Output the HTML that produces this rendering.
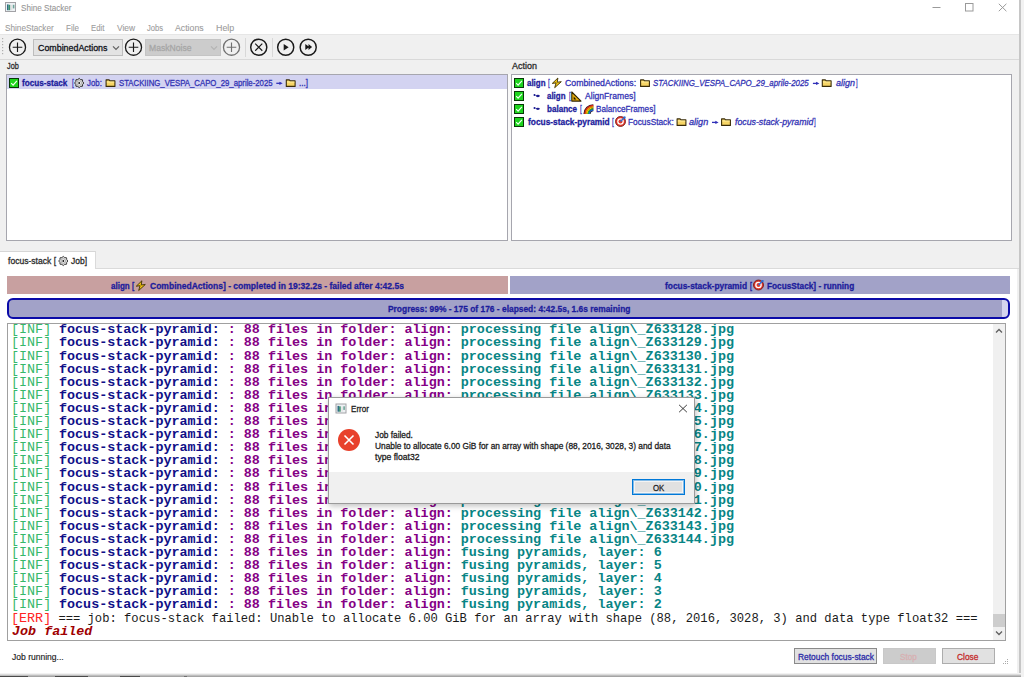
<!DOCTYPE html>
<html><head><meta charset="utf-8"><title>Shine Stacker</title><style>
html,body{margin:0;padding:0;}
body{width:1024px;height:677px;position:relative;overflow:hidden;background:#fff;font-family:"Liberation Sans",sans-serif;}
.t{position:absolute;white-space:pre;transform-origin:0 0;-webkit-text-stroke:0.3px currentColor;}
.lg{position:absolute;white-space:pre;font-family:"Liberation Mono",monospace;transform-origin:0 0;}
.g{color:#36b86a}.n{color:#101088}.p{color:#850085}.c{color:#078585}.r{color:#ff2424}
</style></head><body>
<svg style="position:absolute;left:5px;top:2px;overflow:visible;" width="12" height="11" viewBox="0 0 12 11"><rect x="0.5" y="0.5" width="10" height="9" fill="#eef1f4" stroke="#a2a2a6" stroke-width="1"/><rect x="2" y="2.4" width="1.6" height="5.8" fill="#2f6f84"/><rect x="3.6" y="2.8" width="1.6" height="5.4" fill="#3b8f6a"/><rect x="6" y="3" width="1.2" height="5.2" fill="#e2e0e0"/><rect x="7.8" y="2.8" width="1.6" height="3.6" fill="#6fa59a"/></svg>
<div class="t" style="left:20.50px;top:4.20px;font-size:9.3px;line-height:9.3px;color:#959595;transform:scaleX(0.8722);-webkit-text-stroke:0.1px currentColor;">Shine Stacker</div>
<svg style="position:absolute;left:928px;top:0px;overflow:visible;" width="91" height="19" viewBox="0 0 91 19"><path d="M4.5 7.5H12.5" stroke="#9a9a9a" stroke-width="1"/><rect x="37.5" y="3.5" width="7.5" height="7.5" fill="none" stroke="#9a9a9a" stroke-width="1"/><path d="M70.8 3.8L78.4 11.2M78.4 3.8L70.8 11.2" stroke="#9a9a9a" stroke-width="1"/></svg>
<div class="t" style="left:5.30px;top:23.80px;font-size:9.3px;line-height:9.3px;color:#9c9c9c;transform:scaleX(0.8807);-webkit-text-stroke:0.1px currentColor;">ShineStacker</div>
<div class="t" style="left:65.60px;top:23.80px;font-size:9.3px;line-height:9.3px;color:#9c9c9c;transform:scaleX(0.8600);-webkit-text-stroke:0.1px currentColor;">File</div>
<div class="t" style="left:90.90px;top:23.80px;font-size:9.3px;line-height:9.3px;color:#9c9c9c;transform:scaleX(0.8349);-webkit-text-stroke:0.1px currentColor;">Edit</div>
<div class="t" style="left:116.80px;top:23.80px;font-size:9.3px;line-height:9.3px;color:#9c9c9c;transform:scaleX(0.9100);-webkit-text-stroke:0.1px currentColor;">View</div>
<div class="t" style="left:146.90px;top:23.80px;font-size:9.3px;line-height:9.3px;color:#9c9c9c;transform:scaleX(0.8193);-webkit-text-stroke:0.1px currentColor;">Jobs</div>
<div class="t" style="left:175.40px;top:23.80px;font-size:9.3px;line-height:9.3px;color:#9c9c9c;transform:scaleX(0.9377);-webkit-text-stroke:0.1px currentColor;">Actions</div>
<div class="t" style="left:215.70px;top:23.80px;font-size:9.3px;line-height:9.3px;color:#9c9c9c;transform:scaleX(0.9556);-webkit-text-stroke:0.1px currentColor;">Help</div>
<div style="position:absolute;left:0px;top:34px;width:1019px;height:25px;background:#f0f0f0;border-top:1px solid #e6e6e6;box-sizing:border-box"></div>
<div style="position:absolute;left:0px;top:59px;width:1019px;height:1px;background:#d9d9d9"></div>
<svg style="position:absolute;left:1px;top:37px;overflow:visible;" width="5" height="21" viewBox="0 0 5 21"><rect x="1" y="1" width="1.2" height="1.2" fill="#b0b0b0"/><rect x="1" y="4" width="1.2" height="1.2" fill="#b0b0b0"/><rect x="1" y="7" width="1.2" height="1.2" fill="#b0b0b0"/><rect x="1" y="10" width="1.2" height="1.2" fill="#b0b0b0"/><rect x="1" y="13" width="1.2" height="1.2" fill="#b0b0b0"/><rect x="1" y="16" width="1.2" height="1.2" fill="#b0b0b0"/></svg>
<svg style="position:absolute;left:7px;top:37px;overflow:visible;" width="21" height="21" viewBox="0 0 21 21"><g transform="translate(0.50 0.20)"><circle cx="10" cy="10" r="8.05" fill="none" stroke="#1a1a1a" stroke-width="1.3"/><path d="M10 5.2V14.8M5.2 10H14.8" stroke="#1a1a1a" stroke-width="1.15"/></g></svg>
<div style="position:absolute;left:33px;top:39px;width:90px;height:17px;background:#e3e3e3;border:1px solid #bdbdbd;box-sizing:border-box"></div>
<div class="t" style="left:37.50px;top:42.80px;font-size:9.6px;line-height:9.6px;color:#101018;transform:scaleX(0.9236);">CombinedActions</div>
<svg style="position:absolute;left:112px;top:45px;overflow:visible;" width="9" height="7" viewBox="0 0 9 7"><path d="M1 1.3L4 4.3L7 1.3" fill="none" stroke="#606060" stroke-width="1.2"/></svg>
<svg style="position:absolute;left:123px;top:37px;overflow:visible;" width="21" height="21" viewBox="0 0 21 21"><g transform="translate(0.50 0.20)"><circle cx="10" cy="10" r="8.05" fill="none" stroke="#1a1a1a" stroke-width="1.3"/><path d="M10 5.2V14.8M5.2 10H14.8" stroke="#1a1a1a" stroke-width="1.15"/></g></svg>
<div style="position:absolute;left:145px;top:39px;width:76px;height:17px;background:#cccccc;border:1px solid #c4c4c4;box-sizing:border-box"></div>
<div class="t" style="left:148.75px;top:42.80px;font-size:9.6px;line-height:9.6px;color:#a6a6a6;transform:scaleX(0.8947);">MaskNoise</div>
<svg style="position:absolute;left:210px;top:45px;overflow:visible;" width="9" height="7" viewBox="0 0 9 7"><path d="M1 1.3L4 4.3L7 1.3" fill="none" stroke="#b4b4b4" stroke-width="1.2"/></svg>
<svg style="position:absolute;left:221px;top:37px;overflow:visible;" width="21" height="21" viewBox="0 0 21 21"><g transform="translate(0.50 0.20)"><circle cx="10" cy="10" r="8.05" fill="none" stroke="#707070" stroke-width="1.3"/><path d="M10 5.2V14.8M5.2 10H14.8" stroke="#707070" stroke-width="1.15"/></g></svg>
<div style="position:absolute;left:245px;top:38px;width:1px;height:19px;background:#d8d8d8"></div>
<svg style="position:absolute;left:248px;top:37px;overflow:visible;" width="21" height="21" viewBox="0 0 21 21"><g transform="translate(0.75 0.20)"><circle cx="10" cy="10" r="8.05" fill="none" stroke="#1a1a1a" stroke-width="1.45"/><path d="M6.45 6.45L13.55 13.55M13.55 6.45L6.45 13.55" stroke="#1a1a1a" stroke-width="1.15"/></g></svg>
<div style="position:absolute;left:272px;top:38px;width:1px;height:19px;background:#d8d8d8"></div>
<svg style="position:absolute;left:275px;top:37px;overflow:visible;" width="21" height="21" viewBox="0 0 21 21"><g transform="translate(0.70 0.20)"><circle cx="10" cy="10" r="8.05" fill="none" stroke="#1a1a1a" stroke-width="1.45"/><path d="M8 6.9L13 10.1L8 13.3Z" fill="#1a1a1a"/></g></svg>
<svg style="position:absolute;left:298px;top:37px;overflow:visible;" width="21" height="21" viewBox="0 0 21 21"><g transform="translate(0.20 0.20)"><circle cx="10" cy="10" r="8.05" fill="none" stroke="#1a1a1a" stroke-width="1.45"/><path d="M7.1 6.8L11.2 9.85L7.1 12.9Z M10.3 6.8L13.9 9.85L10.3 12.9Z" fill="#1a1a1a"/></g></svg>
<div style="position:absolute;left:0px;top:60px;width:1019px;height:209px;background:#f0f0f0"></div>
<div class="t" style="left:7.20px;top:61.40px;font-size:9.6px;line-height:9.6px;color:#2a2a2a;transform:scaleX(0.7613);">Job</div>
<div class="t" style="left:512.00px;top:61.40px;font-size:9.6px;line-height:9.6px;color:#2a2a2a;transform:scaleX(0.9326);">Action</div>
<div style="position:absolute;left:6px;top:74px;width:502px;height:167px;background:#fff;border:1px solid #a6a6ae;box-sizing:border-box"></div>
<div style="position:absolute;left:508px;top:74px;width:3px;height:167px;background:#f8f8f8"></div>
<div style="position:absolute;left:511px;top:74px;width:501px;height:167px;background:#fff;border:1px solid #a6a6ae;box-sizing:border-box"></div>
<div style="position:absolute;left:7px;top:75px;width:500px;height:14px;background:#d3d3f1"></div>
<svg style="position:absolute;left:9px;top:78px;overflow:visible;" width="11" height="11" viewBox="0 0 11 11"><rect x="0.5" y="0.5" width="9" height="9" fill="#1ed41e" stroke="#083808" stroke-width="1"/><path d="M2.2 5.2L4.1 7.1L7.9 2.9" fill="none" stroke="#f0fff0" stroke-width="1.2"/></svg>
<div class="t" style="left:22.30px;top:78.30px;font-size:9.5px;line-height:9.5px;color:#1c1c9c;font-weight:700;transform:scaleX(0.8598);">focus-stack</div>
<div class="t" style="left:71.60px;top:78.30px;font-size:9.5px;line-height:9.5px;color:#3232b4;transform:scaleX(0.6792);">[</div>
<svg style="position:absolute;left:74px;top:78px;overflow:visible;" width="11" height="11" viewBox="0 0 11 11"><g transform="translate(0.20 0.00)"><path d="M5.00 0.40 L6.42 1.58 L8.25 1.75 L8.42 3.58 L9.60 5.00 L8.42 6.42 L8.25 8.25 L6.42 8.42 L5.00 9.60 L3.58 8.42 L1.75 8.25 L1.58 6.42 L0.40 5.00 L1.58 3.58 L1.75 1.75 L3.58 1.58Z" fill="#d8d8d8" stroke="#333" stroke-width="1" stroke-linejoin="round"/><circle cx="5" cy="5" r="2.2" fill="#f4f4f4" stroke="#888" stroke-width="0.6"/><circle cx="5" cy="5" r="0.9" fill="#111"/></g></svg>
<div class="t" style="left:87.20px;top:78.30px;font-size:9.5px;line-height:9.5px;color:#3232b4;transform:scaleX(0.8245);">Job:</div>
<svg style="position:absolute;left:105px;top:79px;overflow:visible;" width="11" height="9" viewBox="0 0 11 9"><g transform="translate(0.50 0.00)"><path d="M0.6 0.9H3.6L4.5 1.9H9.4V7.4H0.6Z" fill="#f7d565" stroke="#3a2c08" stroke-width="1.1" stroke-linejoin="round"/><path d="M1.3 3H8.8" stroke="#fff1a6" stroke-width="0.9"/></g></svg>
<div class="t" style="left:119.20px;top:78.30px;font-size:9.5px;line-height:9.5px;color:#3232b4;transform:scaleX(0.8185);">STACKIING_VESPA_CAPO_29_aprile-2025</div>
<svg style="position:absolute;left:276px;top:80px;overflow:visible;" width="8.099999999999966" height="6" viewBox="0 0 8.099999999999966 6"><g transform="translate(0.30 0.80)"><path d="M0 2.5H4.60" stroke="#3030b8" stroke-width="1.3"/><path d="M3.10 0.9L6.40 2.5L3.10 4.1Z" fill="#3030b8"/></g></svg>
<svg style="position:absolute;left:285px;top:79px;overflow:visible;" width="11" height="9" viewBox="0 0 11 9"><g transform="translate(0.70 0.00)"><path d="M0.6 0.9H3.6L4.5 1.9H9.4V7.4H0.6Z" fill="#f7d565" stroke="#3a2c08" stroke-width="1.1" stroke-linejoin="round"/><path d="M1.3 3H8.8" stroke="#fff1a6" stroke-width="0.9"/></g></svg>
<div class="t" style="left:299.00px;top:78.30px;font-size:9.5px;line-height:9.5px;color:#3232b4;transform:scaleX(0.8531);">...]</div>
<svg style="position:absolute;left:514px;top:78px;overflow:visible;" width="11" height="11" viewBox="0 0 11 11"><rect x="0.5" y="0.5" width="9" height="9" fill="#1ed41e" stroke="#083808" stroke-width="1"/><path d="M2.2 5.2L4.1 7.1L7.9 2.9" fill="none" stroke="#f0fff0" stroke-width="1.2"/></svg>
<div class="t" style="left:527.10px;top:77.80px;font-size:9.5px;line-height:9.5px;color:#1c1c9c;font-weight:700;transform:scaleX(0.8352);">align</div>
<div class="t" style="left:548.00px;top:77.80px;font-size:9.5px;line-height:9.5px;color:#3232b4;transform:scaleX(0.6792);">[</div>
<svg style="position:absolute;left:551px;top:77px;overflow:visible;" width="12" height="12" viewBox="0 0 12 12"><g transform="translate(0.50 0.50)"><path d="M6.4 0.5L0.8 5.9L4.6 5.4L3.2 10.2L9.8 4.2L5.7 4.7Z" fill="#f7c814" stroke="#3b2f00" stroke-width="0.9" stroke-linejoin="round"/></g></svg>
<div class="t" style="left:565.40px;top:77.80px;font-size:9.5px;line-height:9.5px;color:#3232b4;transform:scaleX(0.9222);">CombinedActions:</div>
<svg style="position:absolute;left:640px;top:79px;overflow:visible;" width="11" height="9" viewBox="0 0 11 9"><path d="M0.6 0.9H3.6L4.5 1.9H9.4V7.4H0.6Z" fill="#f7d565" stroke="#3a2c08" stroke-width="1.1" stroke-linejoin="round"/><path d="M1.3 3H8.8" stroke="#fff1a6" stroke-width="0.9"/></svg>
<div class="t" style="left:653.40px;top:77.80px;font-size:9.5px;line-height:9.5px;color:#3232b4;font-style:italic;transform:scaleX(0.8300);">STACKIING_VESPA_CAPO_29_aprile-2025</div>
<svg style="position:absolute;left:812px;top:80px;overflow:visible;" width="8.200000000000045" height="6" viewBox="0 0 8.200000000000045 6"><g transform="translate(0.90 0.90)"><path d="M0 2.5H4.70" stroke="#3030b8" stroke-width="1.3"/><path d="M3.20 0.9L6.50 2.5L3.20 4.1Z" fill="#3030b8"/></g></svg>
<svg style="position:absolute;left:821px;top:79px;overflow:visible;" width="11" height="9" viewBox="0 0 11 9"><g transform="translate(0.70 0.00)"><path d="M0.6 0.9H3.6L4.5 1.9H9.4V7.4H0.6Z" fill="#f7d565" stroke="#3a2c08" stroke-width="1.1" stroke-linejoin="round"/><path d="M1.3 3H8.8" stroke="#fff1a6" stroke-width="0.9"/></g></svg>
<div class="t" style="left:835.80px;top:77.80px;font-size:9.5px;line-height:9.5px;color:#3232b4;font-style:italic;transform:scaleX(0.9426);">align</div>
<div class="t" style="left:855.60px;top:77.80px;font-size:9.5px;line-height:9.5px;color:#3232b4;transform:scaleX(0.6038);">]</div>
<svg style="position:absolute;left:514px;top:91px;overflow:visible;" width="11" height="11" viewBox="0 0 11 11"><rect x="0.5" y="0.5" width="9" height="9" fill="#1ed41e" stroke="#083808" stroke-width="1"/><path d="M2.2 5.2L4.1 7.1L7.9 2.9" fill="none" stroke="#f0fff0" stroke-width="1.2"/></svg>
<svg style="position:absolute;left:533px;top:93px;overflow:visible;" width="9" height="6" viewBox="0 0 9 6"><g transform="translate(0.00 0.50)"><circle cx="1.5" cy="1.6" r="1" fill="#1a1a90"/><ellipse cx="4.9" cy="2.5" rx="1.9" ry="1.15" fill="#1a1a90"/><path d="M1.5 1.6L4 2.4" stroke="#1a1a90" stroke-width="0.7" opacity="0.6"/></g></svg>
<div class="t" style="left:546.90px;top:90.80px;font-size:9.5px;line-height:9.5px;color:#1c1c9c;font-weight:700;transform:scaleX(0.8352);">align</div>
<div class="t" style="left:568.50px;top:90.80px;font-size:9.5px;line-height:9.5px;color:#3232b4;transform:scaleX(0.6792);">[</div>
<svg style="position:absolute;left:570px;top:91px;overflow:visible;" width="12" height="12" viewBox="0 0 12 12"><g transform="translate(0.80 0.30)"><path d="M1 0.7V9.8H10.2Z" fill="#e9b10f" stroke="#2e2300" stroke-width="1.1" stroke-linejoin="round"/><path d="M2.9 5.2V8.1H5.6Z" fill="#1a1400"/></g></svg>
<div class="t" style="left:584.50px;top:90.80px;font-size:9.5px;line-height:9.5px;color:#3232b4;transform:scaleX(0.9044);">AlignFrames]</div>
<svg style="position:absolute;left:514px;top:104px;overflow:visible;" width="11" height="11" viewBox="0 0 11 11"><rect x="0.5" y="0.5" width="9" height="9" fill="#1ed41e" stroke="#083808" stroke-width="1"/><path d="M2.2 5.2L4.1 7.1L7.9 2.9" fill="none" stroke="#f0fff0" stroke-width="1.2"/></svg>
<svg style="position:absolute;left:533px;top:106px;overflow:visible;" width="9" height="6" viewBox="0 0 9 6"><g transform="translate(0.00 0.30)"><circle cx="1.5" cy="1.6" r="1" fill="#1a1a90"/><ellipse cx="4.9" cy="2.5" rx="1.9" ry="1.15" fill="#1a1a90"/><path d="M1.5 1.6L4 2.4" stroke="#1a1a90" stroke-width="0.7" opacity="0.6"/></g></svg>
<div class="t" style="left:546.90px;top:103.80px;font-size:9.5px;line-height:9.5px;color:#1c1c9c;font-weight:700;transform:scaleX(0.8503);">balance</div>
<div class="t" style="left:579.70px;top:103.80px;font-size:9.5px;line-height:9.5px;color:#3232b4;transform:scaleX(0.6792);">[</div>
<svg style="position:absolute;left:583px;top:103px;overflow:visible;" width="12" height="12" viewBox="0 0 12 12"><g transform="translate(0.00 0.70)"><path d="M4.00 10.30A6.30 6.30 0 0 1 10.30 4.00" fill="none" stroke="#2a1a1a" stroke-width="7.15"/><path d="M1.72 10.30A8.58 8.58 0 0 1 10.30 1.72" fill="none" stroke="#e02020" stroke-width="1.20"/><path d="M2.88 10.30A7.42 7.42 0 0 1 10.30 2.88" fill="none" stroke="#ff8c00" stroke-width="1.20"/><path d="M4.03 10.30A6.27 6.27 0 0 1 10.30 4.03" fill="none" stroke="#ffd800" stroke-width="1.20"/><path d="M5.18 10.30A5.12 5.12 0 0 1 10.30 5.18" fill="none" stroke="#20b040" stroke-width="1.20"/><path d="M6.33 10.30A3.97 3.97 0 0 1 10.30 6.33" fill="none" stroke="#2060e0" stroke-width="1.20"/></g></svg>
<div class="t" style="left:596.10px;top:103.80px;font-size:9.5px;line-height:9.5px;color:#3232b4;transform:scaleX(0.8604);">BalanceFrames]</div>
<svg style="position:absolute;left:514px;top:117px;overflow:visible;" width="11" height="11" viewBox="0 0 11 11"><rect x="0.5" y="0.5" width="9" height="9" fill="#1ed41e" stroke="#083808" stroke-width="1"/><path d="M2.2 5.2L4.1 7.1L7.9 2.9" fill="none" stroke="#f0fff0" stroke-width="1.2"/></svg>
<div class="t" style="left:527.50px;top:116.80px;font-size:9.5px;line-height:9.5px;color:#1c1c9c;font-weight:700;transform:scaleX(0.8794);">focus-stack-pyramid</div>
<div class="t" style="left:611.70px;top:116.80px;font-size:9.5px;line-height:9.5px;color:#3232b4;transform:scaleX(0.6792);">[</div>
<svg style="position:absolute;left:615px;top:116px;overflow:visible;" width="12" height="12" viewBox="0 0 12 12"><circle cx="5.5" cy="5.5" r="5" fill="#e0392b" stroke="#6a1010" stroke-width="0.8"/><circle cx="5.5" cy="5.5" r="3.3" fill="#fff"/><circle cx="5.5" cy="5.5" r="2" fill="#e0392b"/><path d="M5.5 5.5L10 1" stroke="#2b6fd6" stroke-width="1.4"/><path d="M8 0.5L10.5 0.5L10.5 3" fill="#2b6fd6"/></svg>
<div class="t" style="left:628.10px;top:116.80px;font-size:9.5px;line-height:9.5px;color:#3232b4;transform:scaleX(0.8746);">FocusStack:</div>
<svg style="position:absolute;left:676px;top:118px;overflow:visible;" width="11" height="9" viewBox="0 0 11 9"><g transform="translate(0.50 0.00)"><path d="M0.6 0.9H3.6L4.5 1.9H9.4V7.4H0.6Z" fill="#f7d565" stroke="#3a2c08" stroke-width="1.1" stroke-linejoin="round"/><path d="M1.3 3H8.8" stroke="#fff1a6" stroke-width="0.9"/></g></svg>
<div class="t" style="left:689.00px;top:116.80px;font-size:9.5px;line-height:9.5px;color:#3232b4;font-style:italic;transform:scaleX(0.9576);">align</div>
<svg style="position:absolute;left:712px;top:119px;overflow:visible;" width="8.299999999999955" height="6" viewBox="0 0 8.299999999999955 6"><g transform="translate(0.00 0.90)"><path d="M0 2.5H4.80" stroke="#3030b8" stroke-width="1.3"/><path d="M3.30 0.9L6.60 2.5L3.30 4.1Z" fill="#3030b8"/></g></svg>
<svg style="position:absolute;left:721px;top:118px;overflow:visible;" width="11" height="9" viewBox="0 0 11 9"><path d="M0.6 0.9H3.6L4.5 1.9H9.4V7.4H0.6Z" fill="#f7d565" stroke="#3a2c08" stroke-width="1.1" stroke-linejoin="round"/><path d="M1.3 3H8.8" stroke="#fff1a6" stroke-width="0.9"/></svg>
<div class="t" style="left:734.70px;top:116.80px;font-size:9.5px;line-height:9.5px;color:#3232b4;font-style:italic;transform:scaleX(0.9208);">focus-stack-pyramid</div>
<div class="t" style="left:814.00px;top:116.80px;font-size:9.5px;line-height:9.5px;color:#3232b4;transform:scaleX(0.6415);">]</div>
<div style="position:absolute;left:96px;top:268px;width:923px;height:1px;background:#dadada"></div>
<div style="position:absolute;left:0px;top:251px;width:96px;height:18px;background:#fff;border-top:1px solid #d6d6d6;border-right:1px solid #dadada;box-sizing:border-box"></div>
<div class="t" style="left:8.00px;top:255.80px;font-size:9.5px;line-height:9.5px;color:#2a2a2a;transform:scaleX(0.9006);">focus-stack [</div>
<svg style="position:absolute;left:58px;top:256px;overflow:visible;" width="11" height="11" viewBox="0 0 11 11"><g transform="translate(0.30 0.00)"><path d="M5.00 0.40 L6.42 1.58 L8.25 1.75 L8.42 3.58 L9.60 5.00 L8.42 6.42 L8.25 8.25 L6.42 8.42 L5.00 9.60 L3.58 8.42 L1.75 8.25 L1.58 6.42 L0.40 5.00 L1.58 3.58 L1.75 1.75 L3.58 1.58Z" fill="#d8d8d8" stroke="#444" stroke-width="1" stroke-linejoin="round"/><circle cx="5" cy="5" r="2.2" fill="#f4f4f4" stroke="#888" stroke-width="0.6"/><circle cx="5" cy="5" r="0.9" fill="#111"/></g></svg>
<div class="t" style="left:71.00px;top:255.80px;font-size:9.5px;line-height:9.5px;color:#2a2a2a;transform:scaleX(0.8914);">Job]</div>
<div style="position:absolute;left:0px;top:269px;width:1017px;height:406px;background:#fff"></div>
<div style="position:absolute;left:1017px;top:269px;width:2px;height:406px;background:#f0f0f0"></div>
<div style="position:absolute;left:7px;top:276px;width:501px;height:18px;background:#c8a0a0"></div>
<div style="position:absolute;left:510px;top:276px;width:500px;height:18px;background:#a2a2c8"></div>
<div class="t" style="left:110.90px;top:281.20px;font-size:9.5px;line-height:9.5px;color:#1c1c9c;font-weight:700;transform:scaleX(0.8442);">align</div>
<div class="t" style="left:132.30px;top:281.20px;font-size:9.5px;line-height:9.5px;color:#1c1c9c;font-weight:700;transform:scaleX(0.7302);">[</div>
<svg style="position:absolute;left:135px;top:280px;overflow:visible;" width="12" height="12" viewBox="0 0 12 12"><g transform="translate(0.50 0.30)"><path d="M6.4 0.5L0.8 5.9L4.6 5.4L3.2 10.2L9.8 4.2L5.7 4.7Z" fill="#f7c814" stroke="#3b2f00" stroke-width="0.9" stroke-linejoin="round"/></g></svg>
<div class="t" style="left:149.90px;top:281.20px;font-size:9.5px;line-height:9.5px;color:#1c1c9c;font-weight:700;transform:scaleX(0.8972);">CombinedActions] - completed in 19:32.2s - failed after 4:42.5s</div>
<div class="t" style="left:665.30px;top:281.40px;font-size:9.5px;line-height:9.5px;color:#1c1c9c;font-weight:700;transform:scaleX(0.8827);">focus-stack-pyramid</div>
<div class="t" style="left:750.40px;top:281.40px;font-size:9.5px;line-height:9.5px;color:#1c1c9c;font-weight:700;transform:scaleX(0.6349);">[</div>
<svg style="position:absolute;left:753px;top:279px;overflow:visible;" width="12" height="12" viewBox="0 0 12 12"><g transform="translate(0.00 0.50)"><circle cx="5.5" cy="5.5" r="5" fill="#e0392b" stroke="#6a1010" stroke-width="0.8"/><circle cx="5.5" cy="5.5" r="3.3" fill="#fff"/><circle cx="5.5" cy="5.5" r="2" fill="#e0392b"/><path d="M5.5 5.5L10 1" stroke="#2b6fd6" stroke-width="1.4"/><path d="M8 0.5L10.5 0.5L10.5 3" fill="#2b6fd6"/></g></svg>
<div class="t" style="left:766.80px;top:281.40px;font-size:9.5px;line-height:9.5px;color:#1c1c9c;font-weight:700;transform:scaleX(0.8694);">FocusStack] - running</div>
<div style="position:absolute;left:7px;top:298px;width:1003px;height:21px;box-sizing:border-box;border:2px solid #0a0aa8;border-radius:6px;background:linear-gradient(to right,#a2a2c8 0,#a2a2c8 993px,#d4d4ee 993px);"></div>
<div class="t" style="left:387.60px;top:303.70px;font-size:9.5px;line-height:9.5px;color:#1c1c9c;font-weight:700;transform:scaleX(0.8845);">Progress: 99% - 175 of 176 - elapsed: 4:42.5s, 1.6s remaining</div>
<div style="position:absolute;left:7px;top:323px;width:999px;height:318px;box-sizing:border-box;border:1px solid #a0a0a0;background:#fff;overflow:hidden">
<div class="lg" style="left:3.00px;top:0.30px;font-size:13.4px;line-height:13.4px;transform:scaleY(0.9);"><span class="g">[INF]</span></div>
<div class="lg" style="left:51.00px;top:0.30px;font-size:13.4px;line-height:13.4px;transform:scaleY(0.9);font-weight:bold;"><span class="n">focus-stack-pyramid:</span><span class="p"> : 88 files in folder: align: </span><span class="c">processing file align\_Z633128.jpg</span></div>
<div class="lg" style="left:3.00px;top:13.40px;font-size:13.4px;line-height:13.4px;transform:scaleY(0.9);"><span class="g">[INF]</span></div>
<div class="lg" style="left:51.00px;top:13.40px;font-size:13.4px;line-height:13.4px;transform:scaleY(0.9);font-weight:bold;"><span class="n">focus-stack-pyramid:</span><span class="p"> : 88 files in folder: align: </span><span class="c">processing file align\_Z633129.jpg</span></div>
<div class="lg" style="left:3.00px;top:26.50px;font-size:13.4px;line-height:13.4px;transform:scaleY(0.9);"><span class="g">[INF]</span></div>
<div class="lg" style="left:51.00px;top:26.50px;font-size:13.4px;line-height:13.4px;transform:scaleY(0.9);font-weight:bold;"><span class="n">focus-stack-pyramid:</span><span class="p"> : 88 files in folder: align: </span><span class="c">processing file align\_Z633130.jpg</span></div>
<div class="lg" style="left:3.00px;top:39.60px;font-size:13.4px;line-height:13.4px;transform:scaleY(0.9);"><span class="g">[INF]</span></div>
<div class="lg" style="left:51.00px;top:39.60px;font-size:13.4px;line-height:13.4px;transform:scaleY(0.9);font-weight:bold;"><span class="n">focus-stack-pyramid:</span><span class="p"> : 88 files in folder: align: </span><span class="c">processing file align\_Z633131.jpg</span></div>
<div class="lg" style="left:3.00px;top:52.70px;font-size:13.4px;line-height:13.4px;transform:scaleY(0.9);"><span class="g">[INF]</span></div>
<div class="lg" style="left:51.00px;top:52.70px;font-size:13.4px;line-height:13.4px;transform:scaleY(0.9);font-weight:bold;"><span class="n">focus-stack-pyramid:</span><span class="p"> : 88 files in folder: align: </span><span class="c">processing file align\_Z633132.jpg</span></div>
<div class="lg" style="left:3.00px;top:65.80px;font-size:13.4px;line-height:13.4px;transform:scaleY(0.9);"><span class="g">[INF]</span></div>
<div class="lg" style="left:51.00px;top:65.80px;font-size:13.4px;line-height:13.4px;transform:scaleY(0.9);font-weight:bold;"><span class="n">focus-stack-pyramid:</span><span class="p"> : 88 files in folder: align: </span><span class="c">processing file align\_Z633133.jpg</span></div>
<div class="lg" style="left:3.00px;top:78.90px;font-size:13.4px;line-height:13.4px;transform:scaleY(0.9);"><span class="g">[INF]</span></div>
<div class="lg" style="left:51.00px;top:78.90px;font-size:13.4px;line-height:13.4px;transform:scaleY(0.9);font-weight:bold;"><span class="n">focus-stack-pyramid:</span><span class="p"> : 88 files in folder: align: </span><span class="c">processing file align\_Z633134.jpg</span></div>
<div class="lg" style="left:3.00px;top:92.00px;font-size:13.4px;line-height:13.4px;transform:scaleY(0.9);"><span class="g">[INF]</span></div>
<div class="lg" style="left:51.00px;top:92.00px;font-size:13.4px;line-height:13.4px;transform:scaleY(0.9);font-weight:bold;"><span class="n">focus-stack-pyramid:</span><span class="p"> : 88 files in folder: align: </span><span class="c">processing file align\_Z633135.jpg</span></div>
<div class="lg" style="left:3.00px;top:105.10px;font-size:13.4px;line-height:13.4px;transform:scaleY(0.9);"><span class="g">[INF]</span></div>
<div class="lg" style="left:51.00px;top:105.10px;font-size:13.4px;line-height:13.4px;transform:scaleY(0.9);font-weight:bold;"><span class="n">focus-stack-pyramid:</span><span class="p"> : 88 files in folder: align: </span><span class="c">processing file align\_Z633136.jpg</span></div>
<div class="lg" style="left:3.00px;top:118.20px;font-size:13.4px;line-height:13.4px;transform:scaleY(0.9);"><span class="g">[INF]</span></div>
<div class="lg" style="left:51.00px;top:118.20px;font-size:13.4px;line-height:13.4px;transform:scaleY(0.9);font-weight:bold;"><span class="n">focus-stack-pyramid:</span><span class="p"> : 88 files in folder: align: </span><span class="c">processing file align\_Z633137.jpg</span></div>
<div class="lg" style="left:3.00px;top:131.30px;font-size:13.4px;line-height:13.4px;transform:scaleY(0.9);"><span class="g">[INF]</span></div>
<div class="lg" style="left:51.00px;top:131.30px;font-size:13.4px;line-height:13.4px;transform:scaleY(0.9);font-weight:bold;"><span class="n">focus-stack-pyramid:</span><span class="p"> : 88 files in folder: align: </span><span class="c">processing file align\_Z633138.jpg</span></div>
<div class="lg" style="left:3.00px;top:144.40px;font-size:13.4px;line-height:13.4px;transform:scaleY(0.9);"><span class="g">[INF]</span></div>
<div class="lg" style="left:51.00px;top:144.40px;font-size:13.4px;line-height:13.4px;transform:scaleY(0.9);font-weight:bold;"><span class="n">focus-stack-pyramid:</span><span class="p"> : 88 files in folder: align: </span><span class="c">processing file align\_Z633139.jpg</span></div>
<div class="lg" style="left:3.00px;top:157.50px;font-size:13.4px;line-height:13.4px;transform:scaleY(0.9);"><span class="g">[INF]</span></div>
<div class="lg" style="left:51.00px;top:157.50px;font-size:13.4px;line-height:13.4px;transform:scaleY(0.9);font-weight:bold;"><span class="n">focus-stack-pyramid:</span><span class="p"> : 88 files in folder: align: </span><span class="c">processing file align\_Z633140.jpg</span></div>
<div class="lg" style="left:3.00px;top:170.60px;font-size:13.4px;line-height:13.4px;transform:scaleY(0.9);"><span class="g">[INF]</span></div>
<div class="lg" style="left:51.00px;top:170.60px;font-size:13.4px;line-height:13.4px;transform:scaleY(0.9);font-weight:bold;"><span class="n">focus-stack-pyramid:</span><span class="p"> : 88 files in folder: align: </span><span class="c">processing file align\_Z633141.jpg</span></div>
<div class="lg" style="left:3.00px;top:183.70px;font-size:13.4px;line-height:13.4px;transform:scaleY(0.9);"><span class="g">[INF]</span></div>
<div class="lg" style="left:51.00px;top:183.70px;font-size:13.4px;line-height:13.4px;transform:scaleY(0.9);font-weight:bold;"><span class="n">focus-stack-pyramid:</span><span class="p"> : 88 files in folder: align: </span><span class="c">processing file align\_Z633142.jpg</span></div>
<div class="lg" style="left:3.00px;top:196.80px;font-size:13.4px;line-height:13.4px;transform:scaleY(0.9);"><span class="g">[INF]</span></div>
<div class="lg" style="left:51.00px;top:196.80px;font-size:13.4px;line-height:13.4px;transform:scaleY(0.9);font-weight:bold;"><span class="n">focus-stack-pyramid:</span><span class="p"> : 88 files in folder: align: </span><span class="c">processing file align\_Z633143.jpg</span></div>
<div class="lg" style="left:3.00px;top:209.90px;font-size:13.4px;line-height:13.4px;transform:scaleY(0.9);"><span class="g">[INF]</span></div>
<div class="lg" style="left:51.00px;top:209.90px;font-size:13.4px;line-height:13.4px;transform:scaleY(0.9);font-weight:bold;"><span class="n">focus-stack-pyramid:</span><span class="p"> : 88 files in folder: align: </span><span class="c">processing file align\_Z633144.jpg</span></div>
<div class="lg" style="left:3.00px;top:223.00px;font-size:13.4px;line-height:13.4px;transform:scaleY(0.9);"><span class="g">[INF]</span></div>
<div class="lg" style="left:51.00px;top:223.00px;font-size:13.4px;line-height:13.4px;transform:scaleY(0.9);font-weight:bold;"><span class="n">focus-stack-pyramid:</span><span class="p"> : 88 files in folder: align: </span><span class="c">fusing pyramids, layer: 6</span></div>
<div class="lg" style="left:3.00px;top:236.10px;font-size:13.4px;line-height:13.4px;transform:scaleY(0.9);"><span class="g">[INF]</span></div>
<div class="lg" style="left:51.00px;top:236.10px;font-size:13.4px;line-height:13.4px;transform:scaleY(0.9);font-weight:bold;"><span class="n">focus-stack-pyramid:</span><span class="p"> : 88 files in folder: align: </span><span class="c">fusing pyramids, layer: 5</span></div>
<div class="lg" style="left:3.00px;top:249.20px;font-size:13.4px;line-height:13.4px;transform:scaleY(0.9);"><span class="g">[INF]</span></div>
<div class="lg" style="left:51.00px;top:249.20px;font-size:13.4px;line-height:13.4px;transform:scaleY(0.9);font-weight:bold;"><span class="n">focus-stack-pyramid:</span><span class="p"> : 88 files in folder: align: </span><span class="c">fusing pyramids, layer: 4</span></div>
<div class="lg" style="left:3.00px;top:262.30px;font-size:13.4px;line-height:13.4px;transform:scaleY(0.9);"><span class="g">[INF]</span></div>
<div class="lg" style="left:51.00px;top:262.30px;font-size:13.4px;line-height:13.4px;transform:scaleY(0.9);font-weight:bold;"><span class="n">focus-stack-pyramid:</span><span class="p"> : 88 files in folder: align: </span><span class="c">fusing pyramids, layer: 3</span></div>
<div class="lg" style="left:3.00px;top:275.40px;font-size:13.4px;line-height:13.4px;transform:scaleY(0.9);"><span class="g">[INF]</span></div>
<div class="lg" style="left:51.00px;top:275.40px;font-size:13.4px;line-height:13.4px;transform:scaleY(0.9);font-weight:bold;"><span class="n">focus-stack-pyramid:</span><span class="p"> : 88 files in folder: align: </span><span class="c">fusing pyramids, layer: 2</span></div>
<div class="lg" style="left:3.00px;top:288.50px;font-size:13.4px;line-height:13.4px;transform:scaleY(0.9);"><span class="r">[ERR]</span></div>
<div class="lg" style="left:50.40px;top:288.50px;font-size:12.16px;line-height:12.16px;transform:scaleY(1.0);color:#1a1a1a;">=== job: focus-stack failed: Unable to allocate 6.00 GiB for an array with shape (88, 2016, 3028, 3) and data type float32 ===</div>
<div class="lg" style="left:4.00px;top:301.60px;font-size:13.4px;line-height:13.4px;transform:scaleY(0.9);font-weight:bold;font-style:italic;color:#a00000;">Job failed</div>
<div style="position:absolute;left:985px;top:0;width:12px;height:316px;background:#f0f0f0"></div>
<div style="position:absolute;left:985px;top:290px;width:12px;height:13px;background:#cdcdcd"></div>
<svg style="position:absolute;left:985px;top:3px" width="12" height="8"><path d="M3 5.5L6 2.5L9 5.5" fill="none" stroke="#606060" stroke-width="1.3"/></svg>
<svg style="position:absolute;left:985px;top:305px" width="12" height="8"><path d="M3 2.5L6 5.5L9 2.5" fill="none" stroke="#606060" stroke-width="1.3"/></svg>
</div>
<div class="t" style="left:12.00px;top:653.20px;font-size:9.3px;line-height:9.3px;color:#1a1a1a;transform:scaleX(0.9184);-webkit-text-stroke:0.15px currentColor;">Job running...</div>
<div style="position:absolute;left:794px;top:648px;width:83px;height:16px;background:#e1e1e1;border:1px solid #8a8a8a;box-sizing:border-box"></div>
<div class="t" style="left:797.50px;top:651.80px;font-size:9.5px;line-height:9.5px;color:#2b2ba8;transform:scaleX(0.8827);">Retouch focus-stack</div>
<div style="position:absolute;left:883px;top:648px;width:53px;height:16px;background:#cccccc;border:1px solid #c8c8c8;box-sizing:border-box"></div>
<div class="t" style="left:900.30px;top:651.80px;font-size:9.5px;line-height:9.5px;color:#d8b0b2;transform:scaleX(0.8542);">Stop</div>
<div style="position:absolute;left:942px;top:648px;width:53px;height:16px;background:#e1e1e1;border:1px solid #adadad;box-sizing:border-box"></div>
<div class="t" style="left:957.40px;top:651.80px;font-size:9.5px;line-height:9.5px;color:#c42a2a;transform:scaleX(0.8807);">Close</div>
<svg style="position:absolute;left:1002px;top:658px;overflow:visible;" width="9" height="9" viewBox="0 0 9 9"><rect x="5" y="1" width="1" height="1" fill="#aaa"/><rect x="3" y="3" width="1" height="1" fill="#aaa"/><rect x="5" y="3" width="1" height="1" fill="#aaa"/><rect x="1" y="5" width="1" height="1" fill="#aaa"/><rect x="3" y="5" width="1" height="1" fill="#aaa"/><rect x="5" y="5" width="1" height="1" fill="#aaa"/></svg>
<div style="position:absolute;left:1019px;top:0px;width:2px;height:677px;background:#c6c6c6"></div>
<div style="position:absolute;left:1021px;top:0px;width:3px;height:677px;background:#f2f2f2"></div>
<div style="position:absolute;left:0px;top:673px;width:1021px;height:1px;background:#f2f2f2"></div>
<div style="position:absolute;left:0px;top:674px;width:1021px;height:1px;background:#dcdcdc"></div>
<div style="position:absolute;left:0px;top:675px;width:1021px;height:1px;background:#bebebe"></div>
<div style="position:absolute;left:0px;top:676px;width:1021px;height:1px;background:#a4a4a4"></div>
<div style="position:absolute;left:0px;top:676px;width:28px;height:1px;background:#4a4a4a"></div>
<div style="position:absolute;left:55px;top:676px;width:33px;height:1px;background:#4a4a4a"></div>
<div style="position:absolute;left:120px;top:676px;width:20px;height:1px;background:#4a4a4a"></div>
<div style="position:absolute;left:184px;top:676px;width:3px;height:1px;background:#707070"></div>
<div style="position:absolute;left:328px;top:397px;width:367px;height:107px;box-sizing:border-box;border:1px solid #9a9a9a;background:#fff;box-shadow:1px 2px 6px rgba(0,0,0,0.25)"></div>
<div style="position:absolute;left:329px;top:472px;width:365px;height:31px;background:#f0f0f0"></div>
<svg style="position:absolute;left:335px;top:403px;overflow:visible;" width="12" height="11" viewBox="0 0 12 11"><g transform="translate(0.50 0.50)"><rect x="0.5" y="0.5" width="10" height="9" fill="#eef1f4" stroke="#a2a2a6" stroke-width="1"/><rect x="2" y="2.4" width="1.6" height="5.8" fill="#2f6f84"/><rect x="3.6" y="2.8" width="1.6" height="5.4" fill="#3b8f6a"/><rect x="6" y="3" width="1.2" height="5.2" fill="#e2e0e0"/><rect x="7.8" y="2.8" width="1.6" height="3.6" fill="#6fa59a"/></g></svg>
<div class="t" style="left:350.50px;top:404.20px;font-size:9.5px;line-height:9.5px;color:#222;transform:scaleX(0.8483);">Error</div>
<svg style="position:absolute;left:676px;top:402px;overflow:visible;" width="15" height="15" viewBox="0 0 15 15"><path d="M3.1 2.9L10.9 10.2M10.9 2.9L3.1 10.2" stroke="#303030" stroke-width="0.95"/></svg>
<svg style="position:absolute;left:337px;top:428px;overflow:visible;" width="25" height="25" viewBox="0 0 25 25"><circle cx="12" cy="12" r="11" fill="#e8412c"/><path d="M7.5 7.5L16.5 16.5M16.5 7.5L7.5 16.5" stroke="#fff" stroke-width="1.6"/></svg>
<div class="t" style="left:375.10px;top:429.60px;font-size:9.5px;line-height:9.5px;color:#1a1a1a;transform:scaleX(0.8753);">Job failed.</div>
<div class="t" style="left:375.10px;top:440.90px;font-size:9.5px;line-height:9.5px;color:#1a1a1a;transform:scaleX(0.8761);">Unable to allocate 6.00 GiB for an array with shape (88, 2016, 3028, 3) and data</div>
<div class="t" style="left:375.10px;top:451.90px;font-size:9.5px;line-height:9.5px;color:#1a1a1a;transform:scaleX(0.9063);">type float32</div>
<div style="position:absolute;left:632px;top:479px;width:53px;height:16px;background:#e1e1e1;border:1px solid #0078d7;box-shadow:inset 0 0 0 1px rgba(0,120,215,0.45),inset 0 0 0 2px #f4f4f4;box-sizing:border-box"></div>
<div class="t" style="left:652.70px;top:483.00px;font-size:9.5px;line-height:9.5px;color:#222;transform:scaleX(0.8218);">OK</div>
</body></html>
